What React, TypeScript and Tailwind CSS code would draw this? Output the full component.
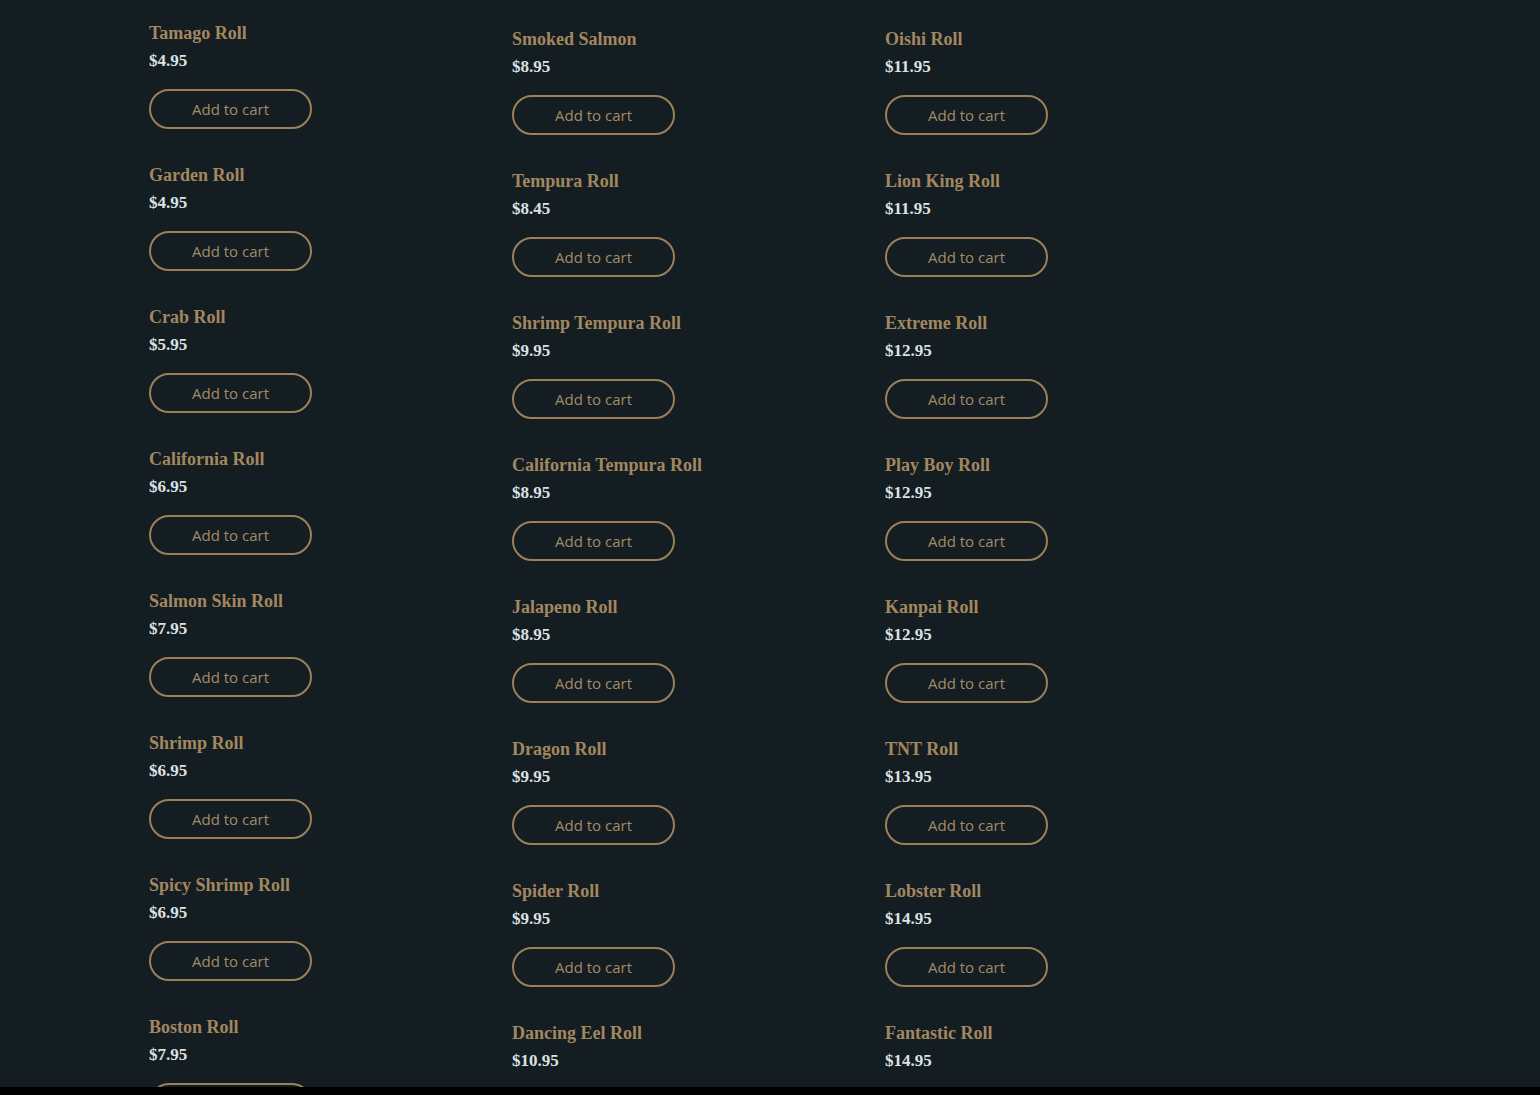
const columns: { name: string; price: string }[][] = [
  [
    { name: "Tamago Roll", price: "$4.95" },
    { name: "Garden Roll", price: "$4.95" },
    { name: "Crab Roll", price: "$5.95" },
    { name: "California Roll", price: "$6.95" },
    { name: "Salmon Skin Roll", price: "$7.95" },
    { name: "Shrimp Roll", price: "$6.95" },
    { name: "Spicy Shrimp Roll", price: "$6.95" },
    { name: "Boston Roll", price: "$7.95" },
  ],
  [
    { name: "Smoked Salmon", price: "$8.95" },
    { name: "Tempura Roll", price: "$8.45" },
    { name: "Shrimp Tempura Roll", price: "$9.95" },
    { name: "California Tempura Roll", price: "$8.95" },
    { name: "Jalapeno Roll", price: "$8.95" },
    { name: "Dragon Roll", price: "$9.95" },
    { name: "Spider Roll", price: "$9.95" },
    { name: "Dancing Eel Roll", price: "$10.95" },
  ],
  [
    { name: "Oishi Roll", price: "$11.95" },
    { name: "Lion King Roll", price: "$11.95" },
    { name: "Extreme Roll", price: "$12.95" },
    { name: "Play Boy Roll", price: "$12.95" },
    { name: "Kanpai Roll", price: "$12.95" },
    { name: "TNT Roll", price: "$13.95" },
    { name: "Lobster Roll", price: "$14.95" },
    { name: "Fantastic Roll", price: "$14.95" },
  ],
];

function Item({ name, price }: { name: string; price: string }) {
  return (
    <div className="flex flex-col items-start">
      <div className="h-[28px] flex items-center text-[18px] font-bold text-[#a3875f] font-['Liberation_Serif',serif]">
        {name}
      </div>
      <div className="h-[28px] flex items-center text-[17px] font-bold text-[#dde1e4] font-['Liberation_Serif',serif]">
        {price}
      </div>
      <button className="mt-[14px] w-[163px] h-[40px] rounded-full border-2 border-[#9a8159] text-[15px] font-medium text-[#a58b66] font-['Open_Sans',sans-serif]">
        Add to cart
      </button>
    </div>
  );
}

export default function App() {
  return (
    <div className="w-[1540px] h-[1095px] flex flex-col bg-black">
      <div className="h-[1087px] bg-[#131d22] overflow-hidden flex pl-[149px]">
        <div className="w-[363px] pt-[19px] flex flex-col gap-[32px]">
          {columns[0].map((it) => (
            <Item key={it.name} {...it} />
          ))}
        </div>
        <div className="w-[373px] pt-[25px] flex flex-col gap-[32px]">
          {columns[1].map((it) => (
            <Item key={it.name} {...it} />
          ))}
        </div>
        <div className="w-[373px] pt-[25px] flex flex-col gap-[32px]">
          {columns[2].map((it) => (
            <Item key={it.name} {...it} />
          ))}
        </div>
      </div>
      <div className="h-[8px] bg-black" />
    </div>
  );
}
